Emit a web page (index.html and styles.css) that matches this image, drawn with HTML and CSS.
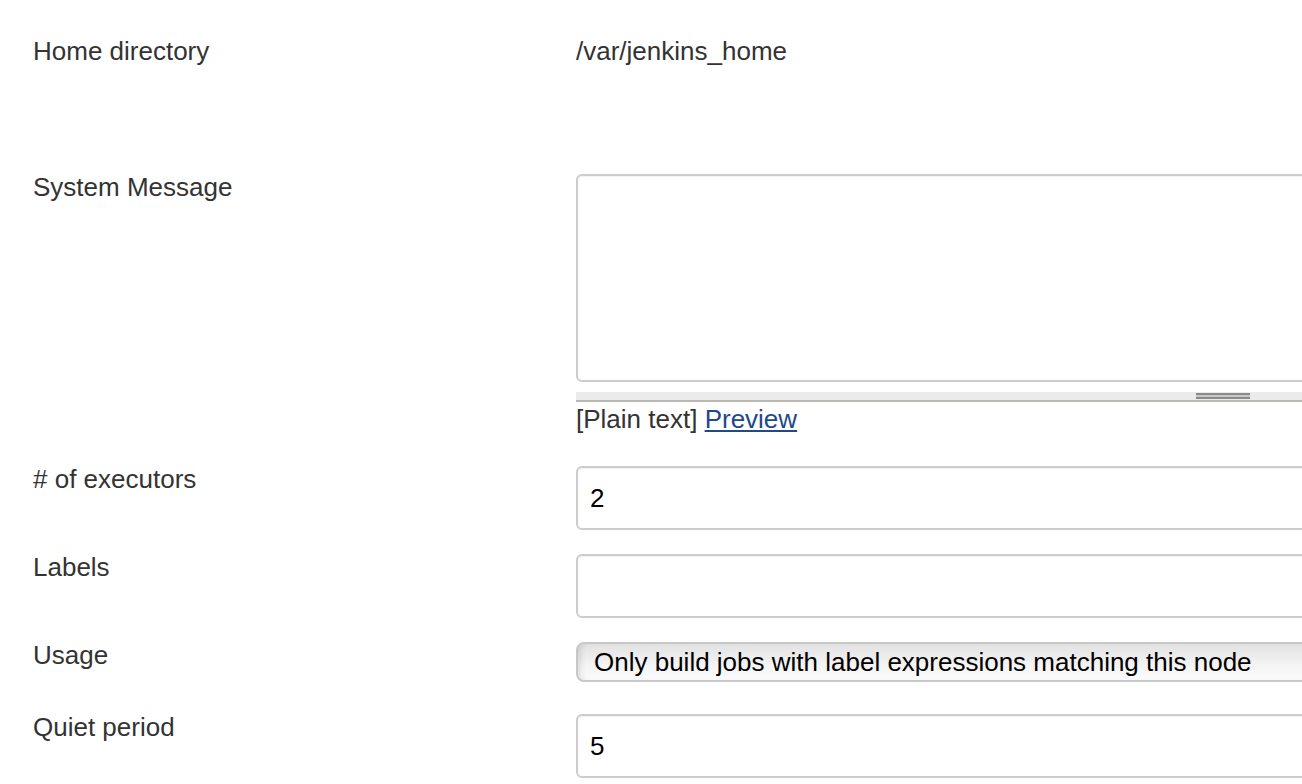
FILE: index.html
```html
<!DOCTYPE html>
<html>
<head>
<meta charset="utf-8">
<link rel="stylesheet" href="styles.css">
</head>
<body>
<div class="page">
  <div class="row row-home">
    <div class="label">Home directory</div>
    <div class="value">/var/jenkins_home</div>
  </div>
  <div class="row row-msg">
    <div class="label">System Message</div>
    <div class="field">
      <div class="textarea"></div>
      <div class="resizer"><span class="grip"></span></div>
      <div class="markup">[Plain text] <a href="#" class="link">Preview</a></div>
    </div>
  </div>
  <div class="row row-exec">
    <div class="label"># of executors</div>
    <div class="field"><div class="input">2</div></div>
  </div>
  <div class="row row-labels">
    <div class="label">Labels</div>
    <div class="field"><div class="input"></div></div>
  </div>
  <div class="row row-usage">
    <div class="label">Usage</div>
    <div class="field"><div class="select">Only build jobs with label expressions matching this node</div></div>
  </div>
  <div class="row row-quiet">
    <div class="label">Quiet period</div>
    <div class="field"><div class="input">5</div></div>
  </div>
</div>
</body>
</html>
```

FILE: styles.css
```css
html, body {
  margin: 0;
  padding: 0;
  background: #ffffff;
  overflow: hidden;
}
body {
  font-family: "Liberation Sans", Arial, Helvetica, sans-serif;
  font-size: 26px;
  color: #333333;
}
.page {
  padding-left: 33px;
  height: 784px;
  overflow: hidden;
}
.row {
  display: flex;
  align-items: flex-start;
}
.label {
  width: 543px;
  flex: none;
  line-height: 30px;
  margin-top: -2px;
}
.value {
  line-height: 30px;
  margin-top: -2px;
}
.field {
  width: 1294px;
  flex: none;
}
.row-home { padding-top: 38px; }
.row-msg { margin-top: 108px; }
.row-exec { margin-top: 32px; }
.row-labels { margin-top: 24px; }
.row-usage { margin-top: 24px; }
.row-quiet { margin-top: 32px; }

.textarea {
  box-sizing: border-box;
  height: 208px;
  border: 2px solid #cccccc;
  border-radius: 6px;
  background: #ffffff;
  box-shadow: inset 0 1px 2px rgba(0,0,0,0.06);
}
.resizer {
  box-sizing: border-box;
  margin-top: 10px;
  height: 10px;
  background: #ebebeb;
  border-bottom: 2px solid #b9b9b2;
  display: flex;
  justify-content: center;
  align-items: flex-start;
}
.grip {
  width: 54px;
  height: 6px;
  margin-top: 1px;
  box-sizing: border-box;
  border-top: 2px solid #8a8a8a;
  border-bottom: 2px solid #8a8a8a;
  background: #c8c8c8;
}
.markup {
  margin-top: 2px;
  line-height: 30px;
  color: #333333;
}
.link {
  color: #204a87;
  text-decoration: underline;
}
.input {
  box-sizing: border-box;
  height: 64px;
  border: 2px solid #cccccc;
  border-radius: 6px;
  padding-left: 12px;
  line-height: 60px;
  color: #000000;
  box-shadow: inset 0 1px 2px rgba(0,0,0,0.06);
}
.select {
  box-sizing: border-box;
  height: 40px;
  border: 2px solid #c8c8c8;
  border-radius: 8px;
  padding-left: 16px;
  line-height: 36px;
  color: #000000;
  background: linear-gradient(to bottom, #e2e2e2 0%, #f4f4f4 60%, #fbfbfb 100%);
  box-shadow: inset 6px 0 6px -4px rgba(0,0,0,0.12);
}
```
